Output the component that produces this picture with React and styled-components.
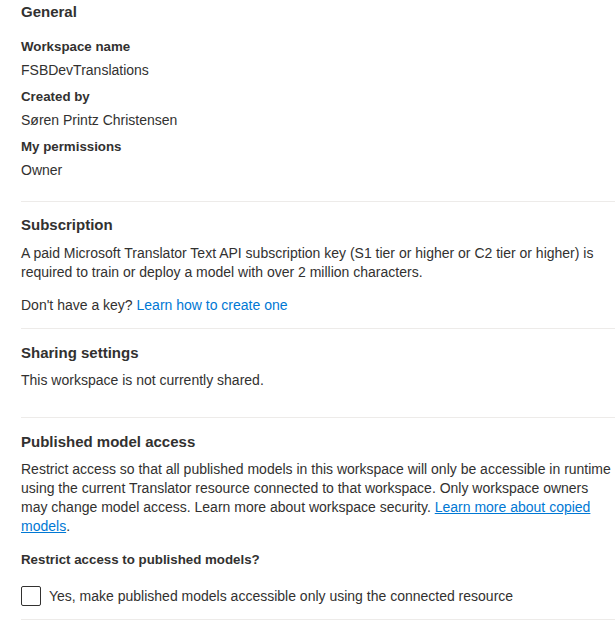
import React, { useState } from 'react'
import styled, { createGlobalStyle } from 'styled-components';

const GlobalStyle = createGlobalStyle`
  body {
    margin: 0;
    background: #ffffff;
    font-family: "Liberation Sans", Arial, sans-serif;
    color: #323130;
  }
`;

function App() {
  const [restricted, setRestricted] = useState(false);

  return (
    <Page>
      <GlobalStyle />
      <Section $top={0} $bottom={21}>
        <Heading>General</Heading>
        <Fields>
          <Field>
            <Label>Workspace name</Label>
            <Value>FSBDevTranslations</Value>
          </Field>
          <Field>
            <Label>Created by</Label>
            <Value>Søren Printz Christensen</Value>
          </Field>
          <Field>
            <Label>My permissions</Label>
            <Value>Owner</Value>
          </Field>
        </Fields>
      </Section>

      <Section $top={11}>
        <Heading>Subscription</Heading>
        <Text>
          A paid Microsoft Translator Text API subscription key (S1 tier or higher or C2 tier or higher) is<br />
          required to train or deploy a model with over 2 million characters.
        </Text>
        <Text $gap={14}>
          Don't have a key? <Link href="#">Learn how to create one</Link>
        </Text>
      </Section>

      <Section $bottom={27}>
        <Heading>Sharing settings</Heading>
        <Text $gap={6}>This workspace is not currently shared.</Text>
      </Section>

      <Section $bottom={13}>
        <Heading>Published model access</Heading>
        <Text $gap={6}>
          Restrict access so that all published models in this workspace will only be accessible in runtime<br />
          using the current Translator resource connected to that workspace. Only workspace owners<br />
          may change model access. Learn more about workspace security. <Link href="#" $underline>Learn more about copied<br />
          models</Link>.
        </Text>
        <Question>Restrict access to published models?</Question>
        <CheckRow onClick={() => setRestricted(!restricted)}>
          <Box $checked={restricted}>
            {restricted && (
              <svg width="12" height="12" viewBox="0 0 12 12">
                <path d="M2 6.5l2.5 2.5L10 3.5" fill="none" stroke="#fff" strokeWidth="1.4" />
              </svg>
            )}
          </Box>
          <span>Yes, make published models accessible only using the connected resource</span>
        </CheckRow>
      </Section>
    </Page>
  );
}

const Page = styled.div`
  padding-left: 21px;
  width: 594px;
  font-size: 14px;
`;

const Section = styled.section`
  padding: ${(p) => (p.$top ?? 12)}px 0 ${(p) => (p.$bottom ?? 13)}px;
  border-bottom: 1px solid #edebe9;
`;

const Heading = styled.h2`
  margin: 0;
  font-size: 15px;
  font-weight: 600;
  line-height: 24px;
`;

const Fields = styled.div`
  display: flex;
  flex-direction: column;
  gap: 7px;
  margin-top: 13px;
`;

const Field = styled.div`
  display: flex;
  flex-direction: column;
  gap: 3px;
`;

const Label = styled.div`
  font-size: 13.3px;
  font-weight: 600;
  line-height: 20px;
`;

const Value = styled.div`
  line-height: 20px;
`;

const Text = styled.p`
  margin: ${(p) => (p.$gap ?? 7)}px 0 0;
  line-height: 19px;
`;

const Link = styled.a`
  color: #0078d4;
  text-decoration: ${(p) => (p.$underline ? 'underline' : 'none')};
`;

const Question = styled.div`
  margin-top: 14px;
  font-size: 13.3px;
  font-weight: 600;
  line-height: 19px;
`;

const CheckRow = styled.label`
  display: flex;
  align-items: center;
  gap: 8px;
  margin-top: 17px;
  line-height: 20px;
  cursor: pointer;
`;

const Box = styled.span`
  width: 20px;
  height: 20px;
  box-sizing: border-box;
  border: 1px solid #323130;
  border-radius: 2px;
  display: flex;
  align-items: center;
  justify-content: center;
  background: ${(p) => (p.$checked ? '#0078d4' : '#fff')};
  border-color: ${(p) => (p.$checked ? '#0078d4' : '#323130')};
`;

export default App;
